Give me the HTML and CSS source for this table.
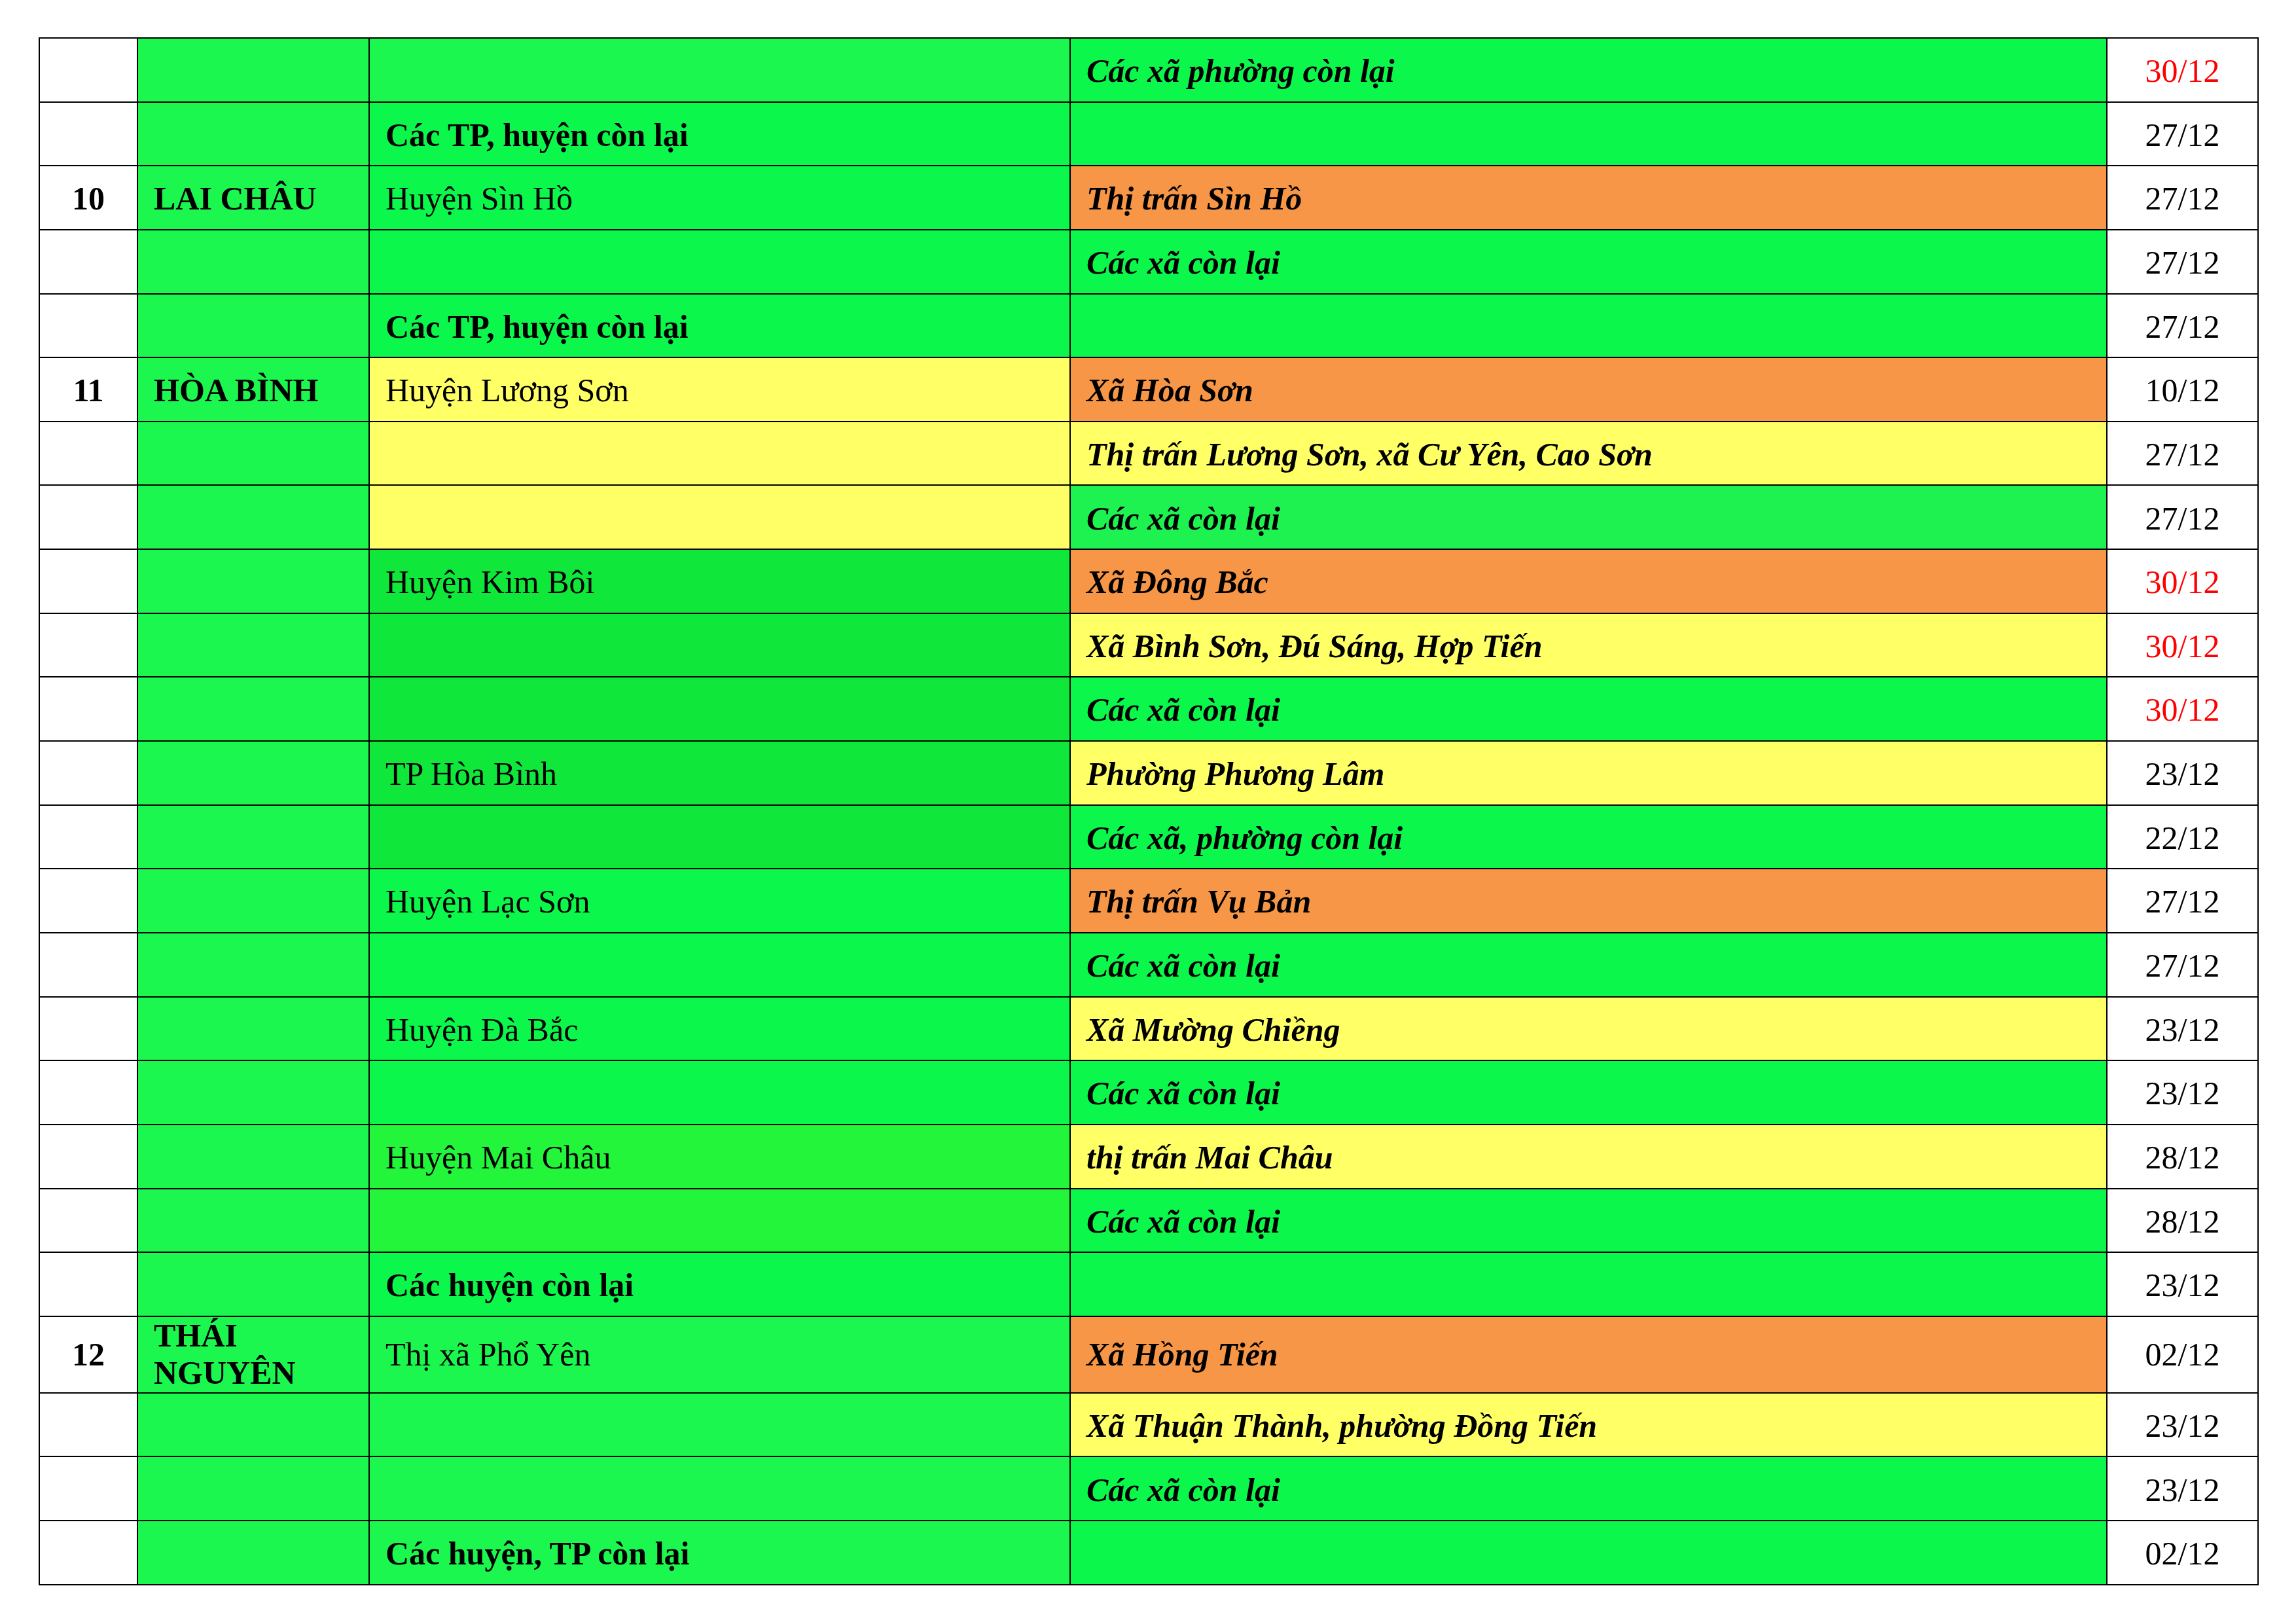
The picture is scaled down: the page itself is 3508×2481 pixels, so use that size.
FILE: index.html
```html
<!DOCTYPE html>
<html lang="vi">
<head>
<meta charset="utf-8">
<title>Bảng</title>
<link rel="stylesheet" href="styles.css">
</head>
<body>
<table class="sheet">
  <colgroup>
    <col class="c-no"><col class="c-prov"><col class="c-dist"><col class="c-ward"><col class="c-date">
  </colgroup>
  <tbody>
    <tr><td class="no"></td><td class="prov"></td><td class="dist ga"></td><td class="ward gb">Các xã phường còn lại</td><td class="date red">30/12</td></tr>
    <tr><td class="no"></td><td class="prov"></td><td class="dist gb bold">Các TP, huyện còn lại</td><td class="ward gb"></td><td class="date">27/12</td></tr>
    <tr><td class="no">10</td><td class="prov">LAI CHÂU</td><td class="dist gb">Huyện Sìn Hồ</td><td class="ward or">Thị trấn Sìn Hồ</td><td class="date">27/12</td></tr>
    <tr><td class="no"></td><td class="prov"></td><td class="dist gb"></td><td class="ward gb">Các xã còn lại</td><td class="date">27/12</td></tr>
    <tr><td class="no"></td><td class="prov"></td><td class="dist gb bold">Các TP, huyện còn lại</td><td class="ward gb"></td><td class="date">27/12</td></tr>
    <tr><td class="no">11</td><td class="prov">HÒA BÌNH</td><td class="dist ye">Huyện Lương Sơn</td><td class="ward or">Xã Hòa Sơn</td><td class="date">10/12</td></tr>
    <tr><td class="no"></td><td class="prov"></td><td class="dist ye"></td><td class="ward ye">Thị trấn Lương Sơn, xã Cư Yên, Cao Sơn</td><td class="date">27/12</td></tr>
    <tr><td class="no"></td><td class="prov"></td><td class="dist ye"></td><td class="ward gl">Các xã còn lại</td><td class="date">27/12</td></tr>
    <tr><td class="no"></td><td class="prov"></td><td class="dist gd">Huyện Kim Bôi</td><td class="ward or">Xã Đông Bắc</td><td class="date red">30/12</td></tr>
    <tr><td class="no"></td><td class="prov"></td><td class="dist gd"></td><td class="ward ye">Xã Bình Sơn, Đú Sáng, Hợp Tiến</td><td class="date red">30/12</td></tr>
    <tr><td class="no"></td><td class="prov"></td><td class="dist gd"></td><td class="ward gb">Các xã còn lại</td><td class="date red">30/12</td></tr>
    <tr><td class="no"></td><td class="prov"></td><td class="dist gd">TP Hòa Bình</td><td class="ward ye">Phường Phương Lâm</td><td class="date">23/12</td></tr>
    <tr><td class="no"></td><td class="prov"></td><td class="dist gd"></td><td class="ward gb">Các xã, phường còn lại</td><td class="date">22/12</td></tr>
    <tr><td class="no"></td><td class="prov"></td><td class="dist gb">Huyện Lạc Sơn</td><td class="ward or">Thị trấn Vụ Bản</td><td class="date">27/12</td></tr>
    <tr><td class="no"></td><td class="prov"></td><td class="dist gb"></td><td class="ward gb">Các xã còn lại</td><td class="date">27/12</td></tr>
    <tr><td class="no"></td><td class="prov"></td><td class="dist gb">Huyện Đà Bắc</td><td class="ward ye">Xã Mường Chiềng</td><td class="date">23/12</td></tr>
    <tr><td class="no"></td><td class="prov"></td><td class="dist gb"></td><td class="ward gb">Các xã còn lại</td><td class="date">23/12</td></tr>
    <tr><td class="no"></td><td class="prov"></td><td class="dist lm">Huyện Mai Châu</td><td class="ward ye">thị trấn Mai Châu</td><td class="date">28/12</td></tr>
    <tr><td class="no"></td><td class="prov"></td><td class="dist lm"></td><td class="ward gb">Các xã còn lại</td><td class="date">28/12</td></tr>
    <tr><td class="no"></td><td class="prov"></td><td class="dist gb bold">Các huyện còn lại</td><td class="ward gb"></td><td class="date">23/12</td></tr>
    <tr class="tall"><td class="no">12</td><td class="prov">THÁI NGUYÊN</td><td class="dist ga">Thị xã Phổ Yên</td><td class="ward or">Xã Hồng Tiến</td><td class="date">02/12</td></tr>
    <tr><td class="no"></td><td class="prov"></td><td class="dist ga"></td><td class="ward ye">Xã Thuận Thành, phường Đồng Tiến</td><td class="date">23/12</td></tr>
    <tr><td class="no"></td><td class="prov"></td><td class="dist ga"></td><td class="ward gb">Các xã còn lại</td><td class="date">23/12</td></tr>
    <tr><td class="no"></td><td class="prov"></td><td class="dist ga bold">Các huyện, TP còn lại</td><td class="ward gb"></td><td class="date">02/12</td></tr>
  </tbody>
</table>
</body>
</html>
```

FILE: styles.css
```css
html, body {
  margin: 0;
  padding: 0;
  background: #ffffff;
}

body {
  padding: 57px 0 0 59px;
  font-family: "Liberation Serif", "Times New Roman", serif;
  font-size: 50px;
  line-height: 1.15;
  color: #000000;
}

.sheet {
  border-collapse: collapse;
  table-layout: fixed;
  width: 3390px;
}

.c-no { width: 150px; }
.c-prov { width: 354px; }
.c-dist { width: 1071px; }
.c-ward { width: 1584px; }
.c-date { width: 231px; }

.sheet tr {
  height: 97.65px;
}

.sheet tr.tall {
  height: 116px;
}

.sheet td {
  border: 2px solid #000000;
  padding: 4px 24px 0 24px;
  vertical-align: middle;
  text-align: left;
  white-space: normal;
}

.sheet tr.tall td {
  padding-top: 0;
}

.sheet td.no {
  background: #ffffff;
  text-align: center;
  font-weight: bold;
  padding-left: 0;
  padding-right: 0;
}

.sheet td.prov {
  background: #1cf74f;
  font-weight: bold;
  padding-right: 30px;
}

.sheet td.ward {
  font-weight: bold;
  font-style: italic;
}

.sheet td.date {
  background: #ffffff;
  text-align: center;
  padding-left: 0;
  padding-right: 0;
}

.sheet td.red {
  color: #ff0000;
}

.bold { font-weight: bold; }

.ga { background: #1cf74f; }
.gb { background: #0cf74b; }
.gd { background: #0fe83a; }
.gl { background: #1ef251; }
.lm { background: #22f53a; }
.or { background: #f79646; }
.ye { background: #ffff66; }
```
